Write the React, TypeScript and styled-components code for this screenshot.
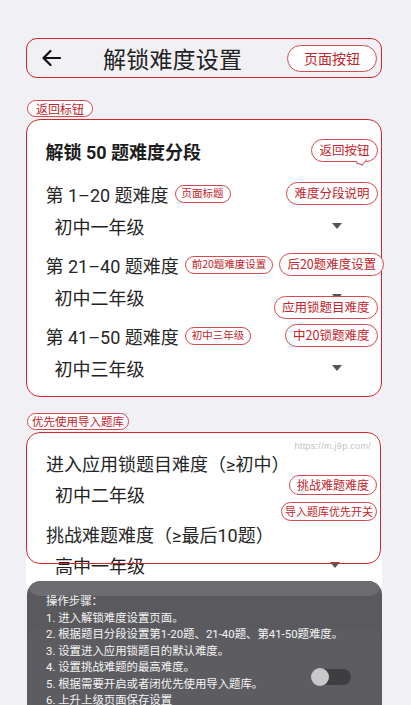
import React from 'react';
import styled, { createGlobalStyle } from 'styled-components';

const RED = '#d3262d';
const RED_TEXT = '#c3232a';

const GlobalStyle = createGlobalStyle`
  * { box-sizing: border-box; }
  body {
    margin: 0;
    background: #f1f1f5;
    font-family: "Noto Sans CJK SC", "Noto Sans", sans-serif;
    color: #222;
    overflow: hidden;
  }
`;

type PillKind = 'header' | 'note' | 'small' | 'mini' | 'inline' | 'tag' | 'tagSmall';

const pillSizes: Record<PillKind, { h: number; fs: number; px: number }> = {
  header: { h: 27, fs: 14, px: 16 },
  note: { h: 23, fs: 12.5, px: 7 },
  small: { h: 20, fs: 12, px: 7 },
  mini: { h: 19, fs: 11, px: 3 },
  inline: { h: 18, fs: 10.5, px: 6 },
  tag: { h: 17, fs: 12, px: 8 },
  tagSmall: { h: 17, fs: 11.5, px: 4 },
};

const Pill = styled.span<{ $kind: PillKind }>`
  display: inline-flex;
  align-items: center;
  justify-content: center;
  flex-shrink: 0;
  height: ${(p) => pillSizes[p.$kind].h}px;
  padding: 0 ${(p) => pillSizes[p.$kind].px}px;
  font-size: ${(p) => pillSizes[p.$kind].fs}px;
  line-height: 1;
  white-space: nowrap;
  color: ${RED_TEXT};
  background: rgba(255, 255, 255, 0.94);
  border: 1px solid #d44a4f;
  border-radius: 999px;
`;

const TailNote = styled(Pill)`
  position: relative;
  margin-left: auto;
  &::after {
    content: '';
    position: absolute;
    right: 12px;
    bottom: -4px;
    width: 6px;
    height: 6px;
    background: #fff;
    border-right: 1px solid #d44a4f;
    border-bottom: 1px solid #d44a4f;
    transform: rotate(20deg) skewX(-20deg);
  }
`;

const Page = styled.div`
  display: flex;
  flex-direction: column;
  padding: 38px 29px 0 26px;
`;

const Header = styled.header`
  display: flex;
  align-items: center;
  height: 40px;
  padding: 0 4px 0 14px;
  border: 1.5px solid ${RED};
  border-radius: 11px;
`;

const Title = styled.h1`
  margin: 0 0 0 42px;
  font-size: 23px;
  font-weight: 400;
  color: #222;
  letter-spacing: 0.2px;
`;

const HeaderPill = styled(Pill)`
  margin-left: auto;
`;

const Tag = styled(Pill)<{ $offset: number }>`
  align-self: flex-start;
  margin: ${(p) => p.$offset}px 0 2px 1px;
`;

const Card = styled.section`
  position: relative;
  display: flex;
  flex-direction: column;
  background: #fff;
  border-radius: 14px;
`;

const SegmentCard = styled(Card)`
  border: 1.5px solid ${RED};
  padding: 15.5px 3.5px 13.5px 18.5px;
  gap: 9px;
`;

const CardTitleRow = styled.div`
  display: flex;
  align-items: center;
  height: 30px;
  margin-bottom: 4px;
`;

const CardTitle = styled.h2`
  margin: 0;
  font-family: Roboto, "Noto Sans CJK SC", sans-serif;
  font-size: 18px;
  font-weight: 700;
  color: #1d1d1d;
`;

const Group = styled.div`
  display: flex;
  flex-direction: column;
  gap: 2px;
`;

const LabelRow = styled.div`
  display: flex;
  align-items: center;
  height: 30px;
  gap: 6px;
`;

const Label = styled.span`
  font-family: Roboto, "Noto Sans CJK SC", sans-serif;
  font-size: 18px;
  color: #262626;
  white-space: nowrap;
`;

const RowNote = styled(Pill)`
  margin-left: auto;
`;

const ValueRow = styled.div`
  position: relative;
  display: flex;
  align-items: center;
  justify-content: space-between;
  height: 30px;
  padding: 0 36px 0 9px;
  font-size: 18px;
  color: #222;
`;

const Caret = styled.span`
  width: 0;
  height: 0;
  border-left: 5.5px solid transparent;
  border-right: 5.5px solid transparent;
  border-top: 6px solid #555;
`;

const OverNote = styled(Pill)<{ $top: number }>`
  position: absolute;
  right: 0;
  top: ${(p) => p.$top}px;
`;

const PriorityCard = styled(Card)`
  padding: 16px 0 16px 20px;
  gap: 10px;
`;

const PriorityGroup = styled(Group)`
  gap: 1px;
`;

const PriorityValue = styled(ValueRow)`
  padding-right: 42px;
`;

const Frame = styled.div`
  position: absolute;
  top: 0;
  left: 0;
  right: 1px;
  height: 132px;
  border: 1.5px solid ${RED};
  border-radius: 14px;
  pointer-events: none;
  z-index: 2;
`;

const CardNote = styled(Pill)<{ $top: number }>`
  position: absolute;
  right: 5px;
  top: ${(p) => p.$top}px;
  z-index: 3;
`;

const Watermark = styled.span`
  position: absolute;
  top: 9px;
  right: 11px;
  font-family: "Liberation Sans", Arial, sans-serif;
  font-size: 9px;
  color: #c2c2c2;
  letter-spacing: 0.3px;
`;

const Steps = styled.div`
  position: relative;
  z-index: 4;
  margin: -15px 0 0 1px;
  padding: 12px 19px 24px;
  background: #5a5a5e;
  border-radius: 14px 14px 0 0;
  overflow: hidden;
  &::before {
    content: '';
    position: absolute;
    top: 0;
    left: 0;
    right: 0;
    height: 15px;
    background: #6d6d71;
    border-radius: 0 0 14px 14px;
  }
  &::after {
    content: '';
    position: absolute;
    top: 48px;
    left: 0;
    right: 0;
    bottom: -20px;
    background: rgba(255, 255, 255, 0.025);
    border-radius: 14px;
  }
`;

const StepsText = styled.div`
  position: relative;
  z-index: 1;
  font-family: Roboto, "Noto Sans CJK SC", sans-serif;
  font-size: 11.4px;
  line-height: 16.5px;
  color: #f5f5f5;
  white-space: nowrap;
`;

const Toggle = styled.span`
  position: absolute;
  z-index: 1;
  left: 284px;
  top: 87px;
  width: 40px;
  height: 18px;
  &::before {
    content: '';
    position: absolute;
    left: 6px;
    right: 0;
    top: 1px;
    height: 16px;
    border-radius: 8px;
    background: #3e3e41;
  }
  &::after {
    content: '';
    position: absolute;
    left: 0;
    top: 0;
    width: 18px;
    height: 18px;
    border-radius: 50%;
    background: #c8c8c9;
  }
`;

const BackArrow = () => (
  <svg width="20" height="18" viewBox="0 0 20 18" fill="none">
    <path d="M19 9H2.5M9.5 2L2.5 9l7 7" stroke="#111" strokeWidth="2.2" strokeLinecap="round" strokeLinejoin="round" />
  </svg>
);

const steps = [
  '操作步骤：',
  '1. 进入解锁难度设置页面。',
  '2. 根据题目分段设置第1-20题、21-40题、第41-50题难度。',
  '3. 设置进入应用锁题目的默认难度。',
  '4. 设置挑战难题的最高难度。',
  '5. 根据需要开启或者闭优先使用导入题库。',
  '6. 上升上级页面保存设置',
];

export default function App() {
  return (
    <>
      <GlobalStyle />
      <Page>
        <Header>
          <BackArrow />
          <Title>解锁难度设置</Title>
          <HeaderPill $kind="header">页面按钮</HeaderPill>
        </Header>

        <Tag $kind="tag" $offset={22}>返回标钮</Tag>
        <SegmentCard>
          <CardTitleRow>
            <CardTitle>解锁 50 题难度分段</CardTitle>
            <TailNote $kind="note">返回按钮</TailNote>
          </CardTitleRow>

          <Group>
            <LabelRow>
              <Label>第 1–20 题难度</Label>
              <Pill $kind="inline">页面标题</Pill>
              <RowNote $kind="note">难度分段说明</RowNote>
            </LabelRow>
            <ValueRow>
              初中一年级
              <Caret />
            </ValueRow>
          </Group>

          <Group>
            <LabelRow>
              <Label>第 21–40 题难度</Label>
              <Pill $kind="inline">前20题难度设置</Pill>
              <RowNote $kind="note">后20题难度设置</RowNote>
            </LabelRow>
            <ValueRow>
              初中二年级
              <Caret />
              <OverNote $kind="note" $top={14}>应用锁题目难度</OverNote>
            </ValueRow>
          </Group>

          <Group>
            <LabelRow>
              <Label>第 41–50 题难度</Label>
              <Pill $kind="inline">初中三年级</Pill>
              <RowNote $kind="note">中20锁题难度</RowNote>
            </LabelRow>
            <ValueRow>
              初中三年级
              <Caret />
            </ValueRow>
          </Group>
        </SegmentCard>

        <Tag $kind="tagSmall" $offset={16}>优先使用导入题库</Tag>
        <PriorityCard>
          <Frame />
          <Watermark>https://m.j9p.com/</Watermark>
          <CardNote $kind="small" $top={43}>挑战难题难度</CardNote>
          <CardNote $kind="mini" $top={70}>导入题库优先开关</CardNote>
          <PriorityGroup>
            <LabelRow>
              <Label>进入应用锁题目难度（≥初中）</Label>
            </LabelRow>
            <PriorityValue>初中二年级</PriorityValue>
          </PriorityGroup>
          <PriorityGroup>
            <LabelRow>
              <Label>挑战难题难度（≥最后10题）</Label>
            </LabelRow>
            <PriorityValue>
              高中一年级
              <Caret />
            </PriorityValue>
          </PriorityGroup>
        </PriorityCard>

        <Steps>
          <StepsText>
            {steps.map((s) => (
              <div key={s}>{s}</div>
            ))}
          </StepsText>
          <Toggle />
        </Steps>
      </Page>
    </>
  );
}
